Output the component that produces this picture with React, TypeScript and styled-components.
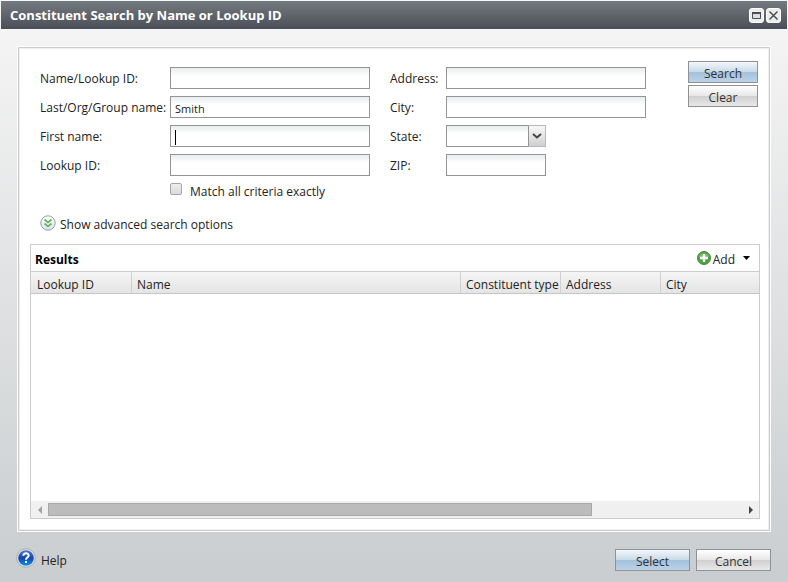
import React from "react";
import styled, { createGlobalStyle } from "styled-components";

const GlobalStyle = createGlobalStyle`
  * { box-sizing: border-box; }
  body { margin: 0; }
  body, button, input, select {
    font-family: "Open Sans", "Noto Sans", sans-serif;
    font-size: 12px;
    line-height: 16px;
    color: #222;
  }
`;

const Dialog = styled.div`
  display: flex;
  flex-direction: column;
  min-height: 100vh;
  padding: 1px 1px 0;
  background: linear-gradient(#f6f6f6, #f2f2f2 10%, #c9cdcf);
`;

const TitleBar = styled.header`
  display: flex;
  align-items: center;
  justify-content: space-between;
  height: 28px;
  padding: 0 6px 0 9px;
  background: linear-gradient(#747b80, #4b4e57);
`;

const Title = styled.h1`
  margin: 0;
  font-size: 13px;
  line-height: 18px;
  font-weight: 700;
  color: #fff;
`;

const WindowButtons = styled.div`
  display: flex;
  gap: 2px;
`;

const WindowButton = styled.button`
  display: flex;
  width: 15px;
  height: 15px;
  padding: 0;
  border: 0;
  background: none;
`;

const Panel = styled.main`
  display: flex;
  flex: 1;
  flex-direction: column;
  margin: 17px 16px 0;
  padding: 14px 10px 12px 12px;
  border: 1px solid #fff;
  background: #fff;
  box-shadow: inset 0 0 0 1px #ccc, inset 0 0 0 2px #eee;
`;

const SearchArea = styled.form`
  display: flex;
  justify-content: space-between;
  align-items: flex-start;
  padding: 0 2px 0 10px;
`;

const Fields = styled.div`
  display: flex;
  gap: 20px;
  padding-top: 6px;
`;

const FieldColumn = styled.div<{ $label: number }>`
  display: grid;
  grid-template-columns: ${(p) => p.$label}px 200px;
  grid-auto-rows: 22px;
  row-gap: 7px;
  align-content: start;
`;

const Label = styled.label`
  padding-top: 4px;
  white-space: nowrap;
`;

const TextBox = styled.input<{ $short?: boolean }>`
  width: ${(p) => (p.$short ? "100px" : "100%")};
  height: 22px;
  padding: 3px 4px 1px;
  border: 1px solid #949494;
  border-radius: 0;
  outline: 0;
  background: linear-gradient(#e9eded, #fff 8px);
  font-size: 11px;
`;

const CaretField = styled.div`
  position: relative;
`;

const Caret = styled.span`
  position: absolute;
  left: 5px;
  top: 5px;
  width: 1px;
  height: 15px;
  background: #000;
`;

const SelectField = styled.div`
  position: relative;
  width: 100px;
  height: 22px;
`;

const StateSelect = styled.select`
  width: 100%;
  height: 22px;
  border: 1px solid #949494;
  border-radius: 0;
  appearance: none;
  background: linear-gradient(#e9eded, #fff 8px);
`;

const SelectArrow = styled.span`
  position: absolute;
  top: 0;
  right: 0;
  display: flex;
  align-items: center;
  justify-content: center;
  width: 18px;
  height: 22px;
  border: 1px solid #b5b8c8;
  border-left-color: #949494;
  background: linear-gradient(#f8f8f8, #e5e5e5 50%, #cfcfcf);
  pointer-events: none;
`;

const CheckLabel = styled.label`
  display: flex;
  grid-column: 2;
  gap: 8px;
  white-space: nowrap;

  span { padding-top: 1px; }
`;

const CheckBox = styled.input`
  width: 12px;
  height: 12px;
  margin: 0;
  border: 1px solid #a5a5a5;
  border-radius: 2px;
  appearance: none;
  background: linear-gradient(#eee, #dcdcdc);

  &:checked { background: #777; }
`;

const ButtonStack = styled.div`
  display: flex;
  flex-direction: column;
  gap: 2px;
`;

const Button = styled.button<{ $primary?: boolean; $wide?: boolean }>`
  width: ${(p) => (p.$wide ? 75 : 70)}px;
  height: 22px;
  padding: 3px 0 0;
  border: 1px solid #8f9294;
  color: #333;
  background: ${(p) =>
    p.$primary
      ? "linear-gradient(#f3f7fa, #c9dbea 48%, #a3c1dc 52%, #bcd3e8)"
      : "linear-gradient(#fff, #e8e8e8 48%, #d0d0d0 52%, #e8e8e8)"};
`;

const Expander = styled.button`
  display: flex;
  align-self: flex-start;
  gap: 4px;
  margin: 10px 0 11px 10px;
  padding: 0;
  border: 0;
  background: none;

  span { padding-top: 2px; }
`;

const Results = styled.section`
  display: flex;
  flex: 1;
  flex-direction: column;
  border: 1px solid #ccc;
`;

const ResultsBar = styled.div`
  display: flex;
  align-items: center;
  justify-content: space-between;
  height: 27px;
  padding: 0 9px 0 4px;
  border-bottom: 1px solid #ccc;
`;

const ResultsTitle = styled.h2`
  margin: 0;
  padding-top: 3px;
  font-size: 12px;
  line-height: 16px;
  color: #000;
`;

const AddButton = styled.button`
  display: flex;
  align-items: center;
  padding: 0;
  border: 0;
  background: none;

  span { margin: 3px 8px 0 2px; }
`;

const ResultsTable = styled.table`
  width: 100%;
  border-collapse: separate;
  border-spacing: 0;
  table-layout: fixed;
`;

const HeaderCell = styled.th<{ $width?: number }>`
  width: ${(p) => (p.$width ? `${p.$width}px` : "auto")};
  height: 22px;
  padding: 4px 0 0 5px;
  border-bottom: 1px solid #c5c5c5;
  border-right: 1px solid #d0d0d0;
  background: linear-gradient(#f5f5f5, #e4e4e4);
  font-weight: 400;
  line-height: 16px;
  text-align: left;
  white-space: nowrap;

  &:first-child { padding-left: 6px; }
  &:last-child { border-right: 0; }
`;

const EmptyArea = styled.div`
  flex: 1;
`;

const ScrollBar = styled.div`
  display: flex;
  height: 17px;
  background: #f0f0f0;
`;

const ScrollButton = styled.button`
  display: flex;
  align-items: center;
  justify-content: center;
  width: 17px;
  height: 17px;
  padding: 0;
  border: 0;
  background: none;
`;

const ScrollTrack = styled.div`
  flex: 1;
  padding: 2px 0;
`;

const ScrollThumb = styled.div`
  width: 78.4%;
  height: 13px;
  border: 1px solid #a8a8a8;
  background: #bcbcbc;
`;

const Footer = styled.footer`
  display: flex;
  align-items: flex-start;
  justify-content: space-between;
  height: 50px;
  padding: 16px 16px 0 15px;
`;

const HelpLink = styled.a`
  display: flex;
  gap: 5px;
  color: #222;
  text-decoration: none;

  span { padding-top: 5px; }
`;

const FooterButtons = styled.div`
  display: flex;
  gap: 6px;
  padding-top: 1px;
`;

const MaximizeIcon = () => (
  <svg width="15" height="15" viewBox="0 0 15 15">
    <rect x="0.5" y="0.5" width="14" height="14" rx="2.5" fill="#eceded" stroke="#fff" />
    <path d="M3.5 4.5h8v6h-8z" fill="#ddd" stroke="#4b4d55" />
    <path d="M3 5h9" stroke="#4b4d55" strokeWidth="2" />
  </svg>
);

const CloseIcon = () => (
  <svg width="15" height="15" viewBox="0 0 15 15">
    <rect x="0.5" y="0.5" width="14" height="14" rx="2.5" fill="#eceded" stroke="#fff" />
    <path d="M3.5 3.5l8 8M11.5 3.5l-8 8" stroke="#4b4d55" strokeWidth="1.5" />
  </svg>
);

const ExpandIcon = () => (
  <svg width="16" height="16" viewBox="0 0 16 16">
    <defs>
      <linearGradient id="expand" x2="0" y2="1">
        <stop stopColor="#fff" />
        <stop offset="1" stopColor="#dfe3ec" />
      </linearGradient>
    </defs>
    <circle cx="8" cy="8" r="7.2" fill="url(#expand)" stroke="#8f9caf" />
    <path d="M4.5 4.5l3.5 3 3.5-3M4.5 8.5l3.5 3 3.5-3" fill="none" stroke="#65b55e" strokeWidth="1.7" />
  </svg>
);

const AddIcon = () => (
  <svg width="14" height="14" viewBox="0 0 14 14">
    <circle cx="7" cy="7" r="6.5" fill="#50a043" stroke="#478d3c" />
    <path d="M2 6a5 4 0 0 1 10 0" fill="#75b968" />
    <path d="M7 3v8M3 7h8" stroke="#fff" strokeWidth="2.4" />
  </svg>
);

const HelpIcon = () => (
  <svg width="20" height="20" viewBox="0 0 20 20">
    <defs>
      <linearGradient id="help" x2="0" y2="1">
        <stop stopColor="#5578cf" />
        <stop offset="0.5" stopColor="#1646a8" />
        <stop offset="1" stopColor="#0794ec" />
      </linearGradient>
    </defs>
    <circle cx="10" cy="10" r="9.3" fill="#dfe2e5" stroke="#a8aeb4" />
    <circle cx="10" cy="10" r="7.8" fill="url(#help)" />
    <path d="M7.3 7.7C7.3 4.4 13 4.6 12.7 7.7C12.5 9.5 10 9.4 10 11.7" fill="none" stroke="#fff" strokeWidth="2" />
    <rect x="9" y="13" width="2" height="2" fill="#fff" />
  </svg>
);

const columns: { name: string; width?: number }[] = [
  { name: "Lookup ID", width: 101 },
  { name: "Name" },
  { name: "Constituent type", width: 100 },
  { name: "Address", width: 100 },
  { name: "City", width: 98 },
];

export default function App() {
  return (
    <>
      <GlobalStyle />
      <Dialog role="dialog" aria-labelledby="dialog-title">
        <TitleBar>
          <Title id="dialog-title">Constituent Search by Name or Lookup ID</Title>
          <WindowButtons>
            <WindowButton type="button" aria-label="Maximize"><MaximizeIcon /></WindowButton>
            <WindowButton type="button" aria-label="Close"><CloseIcon /></WindowButton>
          </WindowButtons>
        </TitleBar>

        <Panel>
          <SearchArea onSubmit={(e) => e.preventDefault()}>
            <Fields>
              <FieldColumn $label={130}>
                <Label htmlFor="name-or-id">Name/Lookup ID:</Label>
                <TextBox id="name-or-id" />
                <Label htmlFor="last-name">Last/Org/Group name:</Label>
                <TextBox id="last-name" defaultValue="Smith" />
                <Label htmlFor="first-name">First name:</Label>
                <CaretField>
                  <TextBox id="first-name" />
                  <Caret aria-hidden="true" />
                </CaretField>
                <Label htmlFor="lookup-id">Lookup ID:</Label>
                <TextBox id="lookup-id" />
                <CheckLabel>
                  <CheckBox type="checkbox" />
                  <span>Match all criteria exactly</span>
                </CheckLabel>
              </FieldColumn>
              <FieldColumn $label={56}>
                <Label htmlFor="address">Address:</Label>
                <TextBox id="address" />
                <Label htmlFor="city">City:</Label>
                <TextBox id="city" />
                <Label htmlFor="state">State:</Label>
                <SelectField>
                  <StateSelect id="state"><option value="" /></StateSelect>
                  <SelectArrow>
                    <svg width="10" height="6" viewBox="0 0 10 6">
                      <path d="M1 1l4 3.5L9 1" fill="none" stroke="#444" strokeWidth="2" />
                    </svg>
                  </SelectArrow>
                </SelectField>
                <Label htmlFor="zip">ZIP:</Label>
                <TextBox id="zip" $short />
              </FieldColumn>
            </Fields>
            <ButtonStack>
              <Button type="submit" $primary>Search</Button>
              <Button type="reset">Clear</Button>
            </ButtonStack>
          </SearchArea>

          <Expander type="button">
            <ExpandIcon />
            <span>Show advanced search options</span>
          </Expander>

          <Results>
            <ResultsBar>
              <ResultsTitle>Results</ResultsTitle>
              <AddButton type="button">
                <AddIcon />
                <span>Add</span>
                <svg width="7" height="4" viewBox="0 0 7 4"><path d="M0 0h7L3.5 4z" fill="#000" /></svg>
              </AddButton>
            </ResultsBar>
            <ResultsTable>
              <thead>
                <tr>
                  {columns.map((c) => (
                    <HeaderCell key={c.name} $width={c.width} scope="col">{c.name}</HeaderCell>
                  ))}
                </tr>
              </thead>
            </ResultsTable>
            <EmptyArea />
            <ScrollBar>
              <ScrollButton type="button" aria-label="Scroll left">
                <svg width="4" height="8" viewBox="0 0 4 8"><path d="M4 0v8L0 4z" fill="#a3a3a3" /></svg>
              </ScrollButton>
              <ScrollTrack><ScrollThumb /></ScrollTrack>
              <ScrollButton type="button" aria-label="Scroll right">
                <svg width="4" height="8" viewBox="0 0 4 8"><path d="M0 0v8l4-4z" fill="#444" /></svg>
              </ScrollButton>
            </ScrollBar>
          </Results>
        </Panel>

        <Footer>
          <HelpLink href="#help">
            <HelpIcon />
            <span>Help</span>
          </HelpLink>
          <FooterButtons>
            <Button type="button" $primary $wide>Select</Button>
            <Button type="button" $wide>Cancel</Button>
          </FooterButtons>
        </Footer>
      </Dialog>
    </>
  );
}
